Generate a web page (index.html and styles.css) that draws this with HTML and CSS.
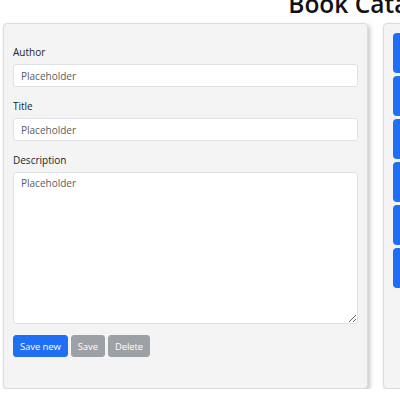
FILE: index.html
```html
<!DOCTYPE html>
<html>
<head>
<meta charset="utf-8">
<link rel="stylesheet" href="styles.css">
</head>
<body>
<div class="page">
  <h1 class="title">Book Catalog</h1>
  <div class="columns">
    <div class="card form-card">
      <div class="group">
        <label class="label">Author</label>
        <input class="field" type="text" placeholder="Placeholder">
      </div>
      <div class="group">
        <label class="label">Title</label>
        <input class="field" type="text" placeholder="Placeholder">
      </div>
      <div class="group">
        <label class="label">Description</label>
        <textarea class="field area" placeholder="Placeholder"></textarea>
      </div>
      <div class="actions">
        <button class="btn btn-primary">Save new</button>
        <button class="btn btn-muted">Save</button>
        <button class="btn btn-muted">Delete</button>
      </div>
    </div>
    <div class="card list-card">
      <button class="book"></button>
      <button class="book"></button>
      <button class="book"></button>
      <button class="book"></button>
      <button class="book"></button>
      <button class="book"></button>
    </div>
  </div>
</div>
</body>
</html>
```
FILE: styles.css
```css
html { overflow: hidden; }
body {
  margin: 0;
  font-family: "Open Sans", "Noto Sans", sans-serif;
  color: #212529;
  background: #ffffff;
}
.page {
  width: 760px;
  padding: 0 3px;
}
.title {
  width: 726px;
  text-align: center;
  font-size: 24.5px;
  font-weight: 600;
  line-height: 28px;
  margin: -10.5px 0 5.5px;
  color: #111;
}
.columns {
  display: grid;
  grid-template-columns: 365px 365px;
  column-gap: 15px;
}
.card {
  background: #f4f4f4;
  border: 1px solid #dcdcdc;
  border-radius: 4px;
  box-shadow: 2px 2px 4px rgba(0,0,0,0.22);
  height: 366px;
  box-sizing: border-box;
}
.form-card {
  padding: 20px 9px 0 9px;
}
.group {
  display: flex;
  flex-direction: column;
  margin-bottom: 11px;
}
.label {
  font-size: 10px;
  line-height: 16px;
  margin-bottom: 4px;
  color: #212529;
}
.field {
  font-family: inherit;
  font-size: 10px;
  height: 23px;
  box-sizing: border-box;
  border: 1px solid #dee2e6;
  border-radius: 3px;
  background: #fff;
  padding: 0 7px;
  outline: none;
}
.field::placeholder { color: #595c5f; }
.area {
  height: 152px;
  padding: 3px 7px;
  resize: vertical;
  line-height: 15px;
}
.actions {
  display: flex;
  gap: 3px;
}
.btn {
  font-family: inherit;
  font-size: 9.5px;
  letter-spacing: -0.1px;
  height: 22px;
  border: 1px solid transparent;
  border-radius: 3px;
  color: #fff;
  padding: 0 6px;
}
.btn-primary { background: #1f6ef6; border-color: #1f6ef6; }
.btn-muted { background: #9da0a4; border-color: #9da0a4; }
.list-card {
  padding: 9px;
  display: flex;
  flex-direction: column;
  gap: 3px;
}
.book {
  height: 40px;
  background: #1f6ef6;
  border: none;
  border-radius: 4px;
}
```
